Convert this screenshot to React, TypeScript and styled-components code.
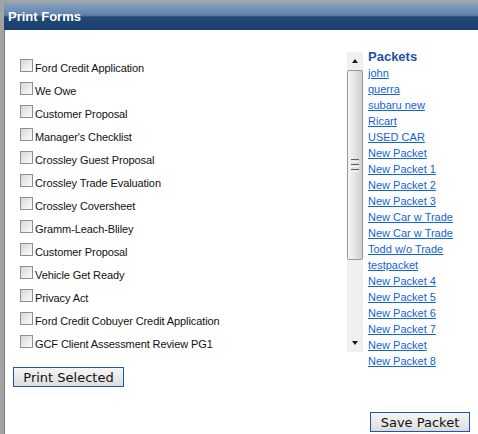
import styled, { createGlobalStyle } from "styled-components";

const GlobalStyle = createGlobalStyle`
html, body {
    margin: 0;
    padding: 0;
    background: #ffffff;
}
body {
    font-family: "Liberation Sans", Arial, sans-serif;
}
`;

const Frame = styled.div`
width: 478px;
height: 434px;
box-sizing: border-box;
border-top: 3px solid #a3a3a3;
border-left: 4px solid #a3a3a3;
box-shadow: inset 1px 1px 0 #7d7d7d;
background: #ffffff;
overflow: hidden;
display: flex;
flex-direction: column;
`;

const Header = styled.div`
height: 27px;
box-sizing: border-box;
padding: 6px 0 0 4px;
background: linear-gradient(to bottom, #86a2c4 0%, #5f82ab 45%, #214a79 52%, #193e6a 100%);
color: #ffffff;
font-weight: bold;
font-size: 13px;
line-height: 16px;
`;

const Body = styled.div`
display: flex;
flex: 1;
`;

const FormsColumn = styled.div`
width: 343px;
box-sizing: border-box;
padding: 24px 0 0 9px;
`;

const FormList = styled.ul`
list-style: none;
margin: 0;
padding: 0 0 0 7px;
`;

const FormRow = styled.li`
height: 23px;
display: flex;
align-items: flex-start;
gap: 2px;
font-size: 11px;
letter-spacing: -0.1px;
color: #111111;
`;

const Label = styled.span`
padding-top: 8px;
line-height: 13px;
`;

const Check = styled.input`
appearance: none;
margin: 5px 0 0 0;
width: 13px;
height: 13px;
box-sizing: border-box;
border: 1px solid #8e8f8f;
background: linear-gradient(135deg, #d6d6d6 0%, #eeeeee 60%, #fbfbfb 100%);
`;

const Button = styled.button`
font-family: "DejaVu Sans", Verdana, sans-serif;
font-size: 13px;
height: 20px;
box-sizing: border-box;
padding: 0 8px;
border: 1px solid #1f56a8;
border-radius: 0;
background: linear-gradient(to bottom, #f6f6f6 0%, #e9e9e9 50%, #dcdcdc 100%);
color: #111111;
line-height: 17px;
`;

const PrintButton = styled(Button)`
margin: 14px 0 0 0;
width: 111px;
`;

const PacketsColumn = styled.div`
display: flex;
flex-direction: column;
`;

const PacketsTop = styled.div`
display: flex;
gap: 5px;
`;

const Scrollbar = styled.div`
margin-top: 22px;
width: 16px;
height: 300px;
box-sizing: border-box;
background: #f0f0f0;
display: flex;
flex-direction: column;
align-items: stretch;
`;

const Arrow = styled.div<{ $down?: boolean }>`
height: 18px;
display: flex;
align-items: center;
justify-content: center;
&::after {
    content: "";
    width: 0;
    height: 0;
    border-left: 3.5px solid transparent;
    border-right: 3.5px solid transparent;
    ${(p) => (p.$down ? "border-top: 4px solid #1b1b1b;" : "border-bottom: 4px solid #1b1b1b;")}
}
`;

const Thumb = styled.div`
height: 190px;
box-sizing: border-box;
border: 1px solid #979797;
border-radius: 2px;
background: linear-gradient(to right, #f5f5f5 0%, #e4e4e4 50%, #cfcfcf 100%);
display: flex;
flex-direction: column;
align-items: center;
justify-content: center;
gap: 2px;
`;

const Grip = styled.span`
width: 8px;
height: 1px;
border-top: 1px solid #5e5e5e;
border-bottom: 1px solid #f8f8f8;
`;

const TrackRest = styled.div`
flex: 1;
`;

const PacketList = styled.div`
display: flex;
flex-direction: column;
padding-top: 19px;
`;

const PacketsTitle = styled.div`
font-size: 13px;
font-weight: bold;
line-height: 16px;
color: #1e52a8;
`;

const PacketLink = styled.a`
font-size: 11px;
line-height: 16px;
color: #1163d6;
text-decoration: underline;
white-space: nowrap;
`;

const SaveButton = styled(Button)`
margin: 43px 0 0 23px;
width: 100px;
`;

const forms = [
    "Ford Credit Application",
    "We Owe",
    "Customer Proposal",
    "Manager's Checklist",
    "Crossley Guest Proposal",
    "Crossley Trade Evaluation",
    "Crossley Coversheet",
    "Gramm-Leach-Bliley",
    "Customer Proposal",
    "Vehicle Get Ready",
    "Privacy Act",
    "Ford Credit Cobuyer Credit Application",
    "GCF Client Assessment Review PG1",
];

const packets = [
    "john",
    "querra",
    "subaru new",
    "Ricart",
    "USED CAR",
    "New Packet",
    "New Packet 1",
    "New Packet 2",
    "New Packet 3",
    "New Car w Trade",
    "New Car w Trade",
    "Todd w/o Trade",
    "testpacket",
    "New Packet 4",
    "New Packet 5",
    "New Packet 6",
    "New Packet 7",
    "New Packet",
    "New Packet 8",
];

export default function App() {
    return (
        <>
            <GlobalStyle />
            <Frame>
                <Header>Print Forms</Header>
                <Body>
                    <FormsColumn>
                        <FormList>
                            {forms.map((f, i) => (
                                <FormRow key={i}>
                                    <Check type="checkbox" />
                                    <Label>{f}</Label>
                                </FormRow>
                            ))}
                        </FormList>
                        <PrintButton>Print Selected</PrintButton>
                    </FormsColumn>
                    <PacketsColumn>
                        <PacketsTop>
                            <Scrollbar>
                                <Arrow />
                                <Thumb>
                                    <Grip />
                                    <Grip />
                                    <Grip />
                                </Thumb>
                                <TrackRest />
                                <Arrow $down />
                            </Scrollbar>
                            <PacketList>
                                <PacketsTitle>Packets</PacketsTitle>
                                {packets.map((p, i) => (
                                    <PacketLink key={i} href="#">{p}</PacketLink>
                                ))}
                            </PacketList>
                        </PacketsTop>
                        <SaveButton>Save Packet</SaveButton>
                    </PacketsColumn>
                </Body>
            </Frame>
        </>
    );
}
